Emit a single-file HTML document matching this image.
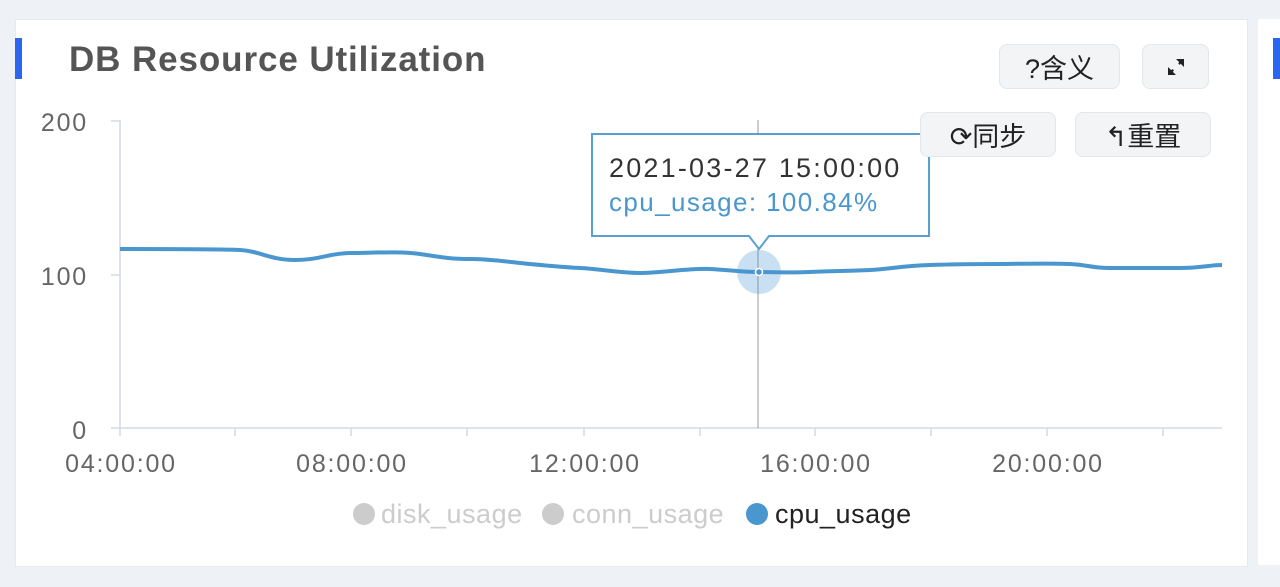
<!DOCTYPE html>
<html><head><meta charset="utf-8"><style>
html,body{margin:0;padding:0;width:1280px;height:587px;overflow:hidden;background:#eef2f7;font-family:"Liberation Sans","Noto Sans CJK SC",sans-serif}
.card{position:absolute;left:15px;top:19px;width:1231px;height:546px;background:#fff;border:1px solid #e6eaf0}
.card2{position:absolute;left:1258px;top:19px;width:40px;height:546px;background:#fff}
.bar{position:absolute;left:15px;top:38px;width:7px;height:41px;background:#2b66f0}
.bar2{position:absolute;left:1273px;top:38px;width:7px;height:41px;background:#2b66f0}
.title{position:absolute;left:69px;top:40px;font-size:35px;color:#555;font-weight:bold;letter-spacing:0.9px}
.btn{position:absolute;background:#f2f4f6;border:1px solid #e3e6ea;border-radius:8px;font-size:27px;color:#222;display:flex;align-items:center;justify-content:center;box-sizing:border-box}
</style></head><body>
<div class="card"></div><div class="card2"></div>
<div class="bar"></div><div class="bar2"></div>
<div class="title">DB Resource Utilization</div>
<svg width="1280" height="587" style="position:absolute;left:0;top:0">
<g stroke="#d3d9e6" stroke-width="1.5" fill="none">
<path d="M120 120V428H1222"/><path d="M111 121H120M111 275H120M111 428H120"/>
<path d="M120 428v8M235 428v8M351 428v8M467 428v8M584 428v8M700 428v8M815 428v8M931 428v8M1047 428v8M1163 428v8"/>
</g>
<g font-size="25" fill="#666" font-family="Liberation Sans,sans-serif" letter-spacing="1.8">
<text x="88" y="131" text-anchor="end">200</text>
<text x="88" y="285" text-anchor="end">100</text>
<text x="88" y="439" text-anchor="end">0</text>
<text x="121" y="472" text-anchor="middle">04:00:00</text>
<text x="352" y="472" text-anchor="middle">08:00:00</text>
<text x="585" y="472" text-anchor="middle">12:00:00</text>
<text x="816" y="472" text-anchor="middle">16:00:00</text>
<text x="1048" y="472" text-anchor="middle">20:00:00</text>
</g>
<line x1="758" y1="120" x2="758" y2="428" stroke="#aaa" stroke-width="1.2"/>
<circle cx="759" cy="272" r="22" fill="#4a97cf" opacity="0.3"/>
<path d="M120 249C180 249 220 249 240 250S270 260 295 260S330 253 350 253S400 251 420 254S450 259 470 259S510 262 520 263S560 267 580 268S620 273 640 273S690 268 710 269S740 272 758 272S790 273 810 272S850 271 870 270S900 266 930 265S990 264 1000 264S1050 263 1070 264S1090 268 1110 268S1160 268 1180 268S1210 265 1222 265" fill="none" stroke="#4a97cf" stroke-width="4"/>
<circle cx="759" cy="272" r="3.5" fill="#4a97cf" stroke="#fff" stroke-width="1.5"/>
<path d="M592 134H929V236H769L759 249L749 236H592Z" fill="#fff" stroke="#5aa0cf" stroke-width="2"/>
<text x="609" y="177" font-size="27" fill="#333" font-family="Liberation Sans,sans-serif" letter-spacing="2.2">2021-03-27 15:00:00</text>
<text x="609" y="211" font-size="26" fill="#4a97cf" font-family="Liberation Sans,sans-serif" letter-spacing="1.4">cpu_usage: 100.84%</text>
<g font-size="27" font-family="Liberation Sans,sans-serif" letter-spacing="0.5">
<circle cx="364" cy="514" r="11" fill="#ccc"/><text x="381" y="523" fill="#ccc">disk_usage</text>
<circle cx="553" cy="514" r="11" fill="#ccc"/><text x="572" y="523" fill="#ccc">conn_usage</text>
<circle cx="757" cy="514" r="11" fill="#4a97cf"/><text x="775" y="523" fill="#222">cpu_usage</text>
</g>
</svg>
<div class="btn" style="left:999px;top:44px;width:121px;height:45px">?含义</div>
<div class="btn" style="left:1142px;top:44px;width:67px;height:45px"><svg width="24" height="24" viewBox="0 0 24 24"><path d="M5 19L19 5" stroke="#222" stroke-width="2.2" stroke-dasharray="4 8" stroke-dashoffset="-2"/><path d="M12 4H20V12Z M4 12V20H12Z" fill="#222"/></svg></div>
<div class="btn" style="left:920px;top:112px;width:136px;height:45px">⟳同步</div>
<div class="btn" style="left:1075px;top:112px;width:136px;height:45px">↰重置</div>
</body></html>
